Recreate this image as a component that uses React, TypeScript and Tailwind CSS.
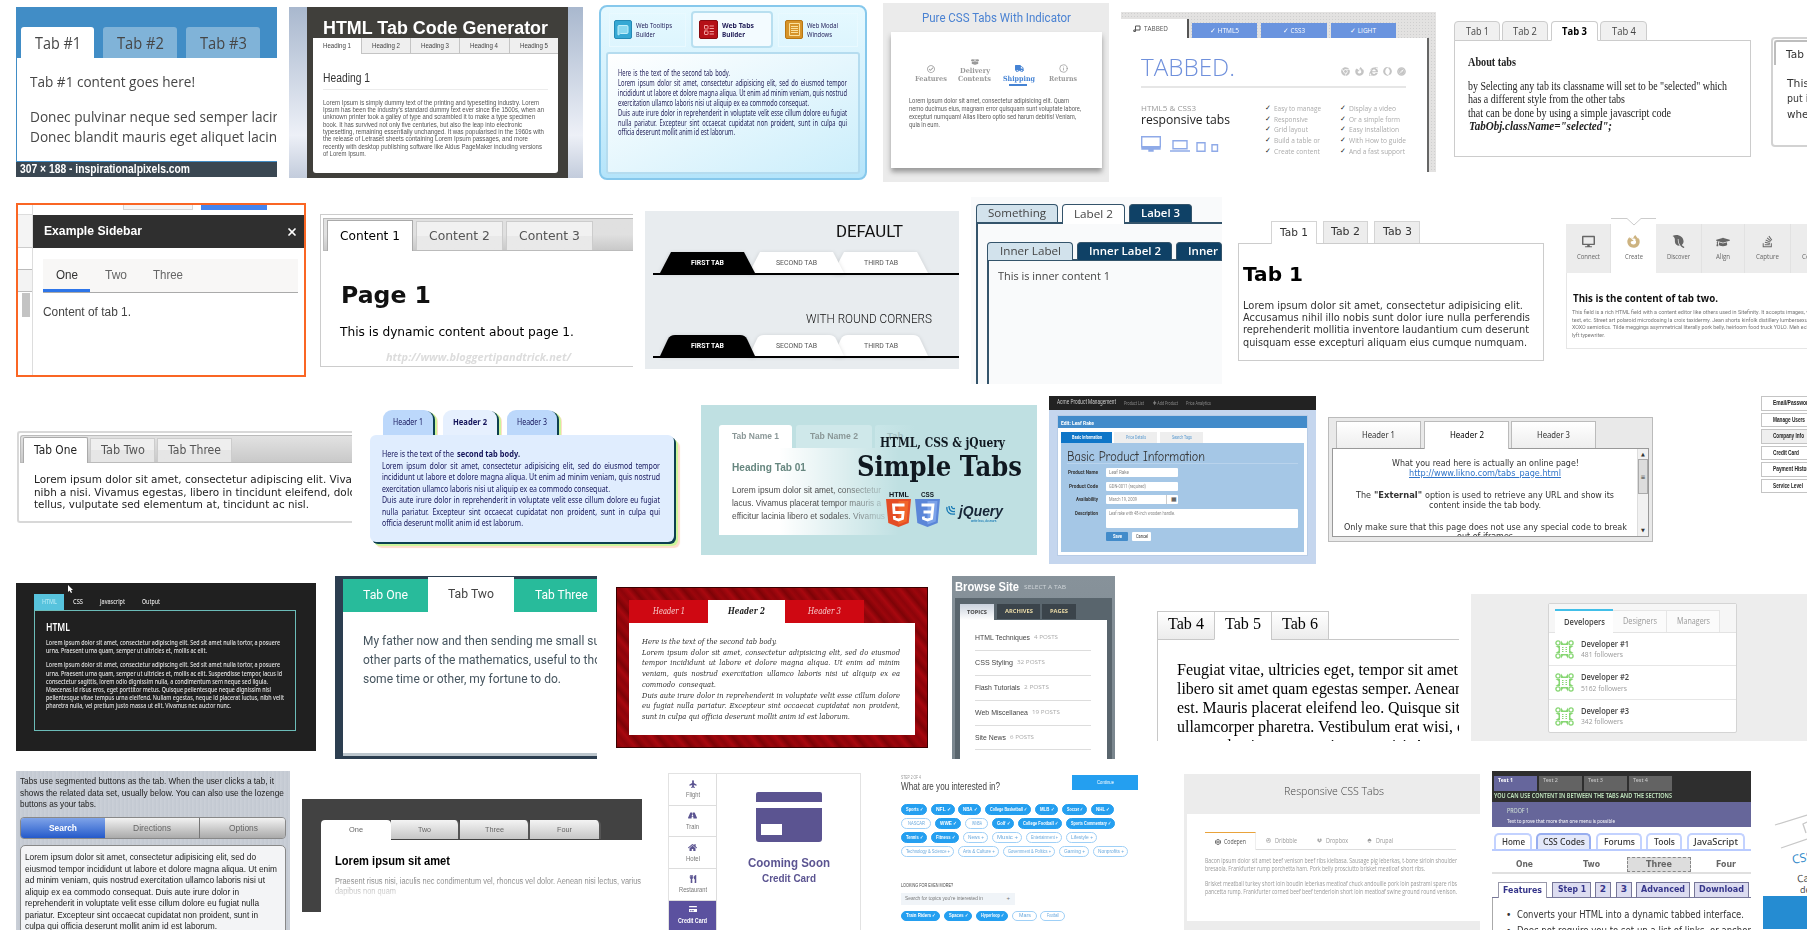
import React, { useLayoutEffect, useRef } from "react";
import { FaFirefoxBrowser, FaLeaf, FaGraduationCap, FaStackOverflow, FaPlane, FaRoad, FaHome, FaUtensils, FaCreditCard, FaDesktop, FaDribbble, FaDropbox, FaDrupal, FaCodepen, FaTruck, FaRegCheckCircle, FaBoxOpen, FaChrome, FaOpera, FaSafari, FaInternetExplorer } from "react-icons/fa";
import { Info, X, MessageSquare, LayoutList } from "lucide-react";

const AR = "[font-family:'Liberation_Sans',sans-serif] ";
const OS = "[font-family:'Open_Sans',sans-serif] ";
const NS = "[font-family:'Noto_Sans',sans-serif] ";
const RO = "[font-family:Roboto,sans-serif] ";
const DV = "[font-family:'DejaVu_Sans',sans-serif] ";
const DC = "[font-family:'DejaVu_Sans_Condensed','DejaVu_Sans',sans-serif] ";
const DS = "[font-family:'DejaVu_Serif',serif] ";
const TM = "[font-family:'Liberation_Serif',serif] ";

/* One unbroken line of copy; `w` condenses or widens it to a fixed measure. */
function L({ c = "", w, children }: { c?: string; w?: number; children: React.ReactNode }) {
  const ref = useRef<HTMLSpanElement>(null);
  useLayoutEffect(() => {
    const el = ref.current;
    if (!el || !w) return;
    el.style.transform = "none";
    el.style.transform = `scaleX(${w / el.getBoundingClientRect().width})`;
  }, [w]);
  return (
    <span className={`block w-max shrink-0 whitespace-nowrap ${c}`} style={w ? { width: w } : undefined}>
      <span ref={ref} className="inline-block origin-left">{children}</span>
    </span>
  );
}

function P({ c = "", lines }: { c?: string; lines: [string, number?][] }) {
  return <div className={`flex flex-col ${c}`}>{lines.map(([t, w], i) => <L key={i} w={w}>{t}</L>)}</div>;
}

/* Justified copy: every line shares one scale and the word gaps take up the rest. */
function J({ c = "", lines }: { c?: string; lines: [string, number][] }) {
  const ref = useRef<HTMLDivElement>(null);
  useLayoutEffect(() => {
    const els = Array.from(ref.current!.querySelectorAll<HTMLSpanElement>("span"));
    els.forEach((e) => { e.style.transform = "none"; e.style.wordSpacing = "0px"; });
    const nat = els.map((e) => e.getBoundingClientRect().width);
    const k = Math.min(...nat.map((n, i) => lines[i][1] / n));
    els.forEach((e, i) => {
      e.style.wordSpacing = `${(lines[i][1] / k - nat[i]) / (lines[i][0].split(" ").length - 1)}px`;
      e.style.transform = `scaleX(${k})`;
    });
  });
  return <div ref={ref} className={`flex flex-col items-start ${c}`}>{lines.map(([t], i) => <span key={i} className="block origin-left whitespace-nowrap">{t}</span>)}</div>;
}

function Box({ c = "", children }: { c?: string; children?: React.ReactNode }) {
  return <div className={`shrink-0 ${c}`}>{children}</div>;
}

function Tab({ c = "", w, children }: { c?: string; w?: number; children?: React.ReactNode }) {
  return <div className={`flex shrink-0 items-center justify-center ${c}`}><L w={w}>{children}</L></div>;
}

function HashTabs() {
  return (
    <Box c={OS + "ml-[16px] mt-[7px] flex h-[170px] w-[261px] flex-col overflow-hidden bg-white text-[#464646]"}>
      <div className="flex h-[51px] shrink-0 items-end bg-[#418dc6] pl-[5px] text-[15.5px] font-medium">
        <Tab c="h-[31px] w-[73px] rounded-t-[3px] bg-white pt-[3px]" w={46}>Tab #1</Tab>
        <Tab c="ml-[9px] h-[31px] w-[74px] rounded-t-[3px] bg-[#80b3d8] pt-[3px]" w={47}>Tab #2</Tab>
        <Tab c="ml-[9px] h-[31px] w-[74px] rounded-t-[3px] bg-[#80b3d8] pt-[3px]" w={47}>Tab #3</Tab>
      </div>
      <div className="h-[104px] shrink-0 border-b border-l border-[#418dc6] pl-[13px] pt-[14px] text-[14.5px] leading-5">
        <L w={165}>Tab #1 content goes here!</L>
        <L c="mt-[15px]" w={248}>Donec pulvinar neque sed semper lacir</L>
        <L w={247}>Donec blandit mauris eget aliquet lacin</L>
      </div>
      <div className={AR + "h-[15px] bg-[#3a4752] pl-[4px] text-[12px] font-bold leading-[15px] text-white"}>
        <L w={170}>307 × 188 - inspirationalpixels.com</L>
      </div>
    </Box>
  );
}

function CodeGenerator() {
  return (
    <Box c={AR + "ml-[12px] mt-[7px] h-[171px] w-[294px] bg-linear-to-b from-[#a9b8ce] via-[#edf0f7] via-75% to-[#c3ccdc] pl-[18px]"}>
      <div className="h-full w-[261px] bg-[#403f3b] pl-[6px] pt-[11px]">
        <L c="ml-[10px] text-[18px] font-bold leading-5 text-white" w={225}>HTML Tab Code Generator</L>
        <div className="h-[135px] w-[245px] rounded-b-[3px] bg-white">
          <div className="flex text-[7.5px] text-[#444]">
            <Tab c="h-[16px] w-[48px]" w={28}>Heading 1</Tab>
            {["Heading 2", "Heading 3", "Heading 4", "Heading 5"].map((t) => (
              <Tab key={t} c="h-[16px] w-[49.2px] border-b border-l border-[#c4c4c4] bg-[#efefef]" w={28}>{t}</Tab>
            ))}
          </div>
          <L c="ml-[10px] mt-[17px] text-[12.5px] leading-[14px] text-[#333]" w={47}>Heading 1</L>
          <div className="ml-[10px] mt-[4px] h-px w-[225px] bg-[#ececec]" />
          <P c="ml-[10px] mt-[8.5px] text-[6.7px] leading-[7.35px] text-[#555]" lines={[
            ["Lorem Ipsum is simply dummy text of the printing and typesetting industry. Lorem", 216],
            ["Ipsum has been the industry's standard dummy text ever since the 1500s, when an", 221],
            ["unknown printer took a galley of type and scrambled it to make a type specimen", 212],
            ["book. It has survived not only five centuries, but also the leap into electronic", 199],
            ["typesetting, remaining essentially unchanged. It was popularised in the 1960s with", 221],
            ["the release of Letraset sheets containing Lorem Ipsum passages, and more", 205],
            ["recently with desktop publishing software like Aldus PageMaker including versions", 219],
            ["of Lorem Ipsum.", 43]]} />
        </div>
      </div>
    </Box>
  );
}

function WebBuilder() {
  const icon = "flex h-[19px] items-center justify-center rounded-[2px] border ";
  return (
    <Box c={NS + "ml-[16px] mt-[5px] h-[175px] w-[268px] rounded-[8px] border-2 border-[#86c8ec] bg-linear-to-b from-[#e6f9ff] via-[#d2f0fc] to-[#b4e4fa] px-[5px] pt-[4px] text-[#26235c]"}>
      <div className="flex items-center text-[7.6px] leading-[8.5px]">
        <div className="ml-[3px] flex h-[34px] w-[77px] items-center border border-[#e9f9ff] pl-[4px]">
          <div className={icon + "w-[18px] border-[#2389b4] bg-[#35a8d4] text-[#c0eefa]"}><MessageSquare size={12} fill="#8ad8ef" /></div>
          <div className="ml-[4px]"><L w={36}>Web Tooltips</L><L w={19}>Builder</L></div>
        </div>
        <div className="ml-[5px] flex h-[37px] w-[82px] items-center rounded-[4px] border-2 border-[#b8dff0] bg-[#f3fbff] pl-[6px] font-bold">
          <div className={icon + "w-[19px] border-[#870a10] bg-[#b51017] text-[#f4a0a0]"}><LayoutList size={12} /></div>
          <div className="ml-[4px]"><L w={32}>Web Tabs</L><L w={23}>Builder</L></div>
        </div>
        <div className="ml-[5px] flex h-[34px] w-[80px] items-center border border-[#e9f9ff] pl-[6px]">
          <div className={icon + "w-[18px] border-[#b97612] bg-[#d6942a] text-[#fbe19d]"}>
            <svg width="11" height="13" viewBox="0 0 11 13" fill="none" stroke="currentColor"><path d="M.5.5h10v12H.5zM2 3.500h7M2 5.500h7M2 7.500h7M2 9.500h7" /></svg>
          </div>
          <div className="ml-[4px]"><L w={31}>Web Modal</L><L w={25}>Windows</L></div>
        </div>
      </div>
      <div className="mt-[4px] h-[122px] w-[254px] rounded-[3px] border-2 border-[#b5dcef] bg-linear-to-br from-white to-[#cbeefb] pl-[10px] pt-[14px]">
        <J c="text-[8.3px] leading-[9.9px]" lines={[
          ["Here is the text of the second tab body.", 112],
          ["Lorem ipsum dolor sit amet, consectetur adipisicing elit, sed do eiusmod tempor", 229],
          ["incididunt ut labore et dolore magna aliqua. Ut enim ad minim veniam, quis nostrud", 229],
          ["exercitation ullamco laboris nisi ut aliquip ex ea commodo consequat.", 191],
          ["Duis aute irure dolor in reprehenderit in voluptate velit esse cillum dolore eu fugiat", 229],
          ["nulla pariatur. Excepteur sint occaecat cupidatat non proident, sunt in culpa qui", 229],
          ["officia deserunt mollit anim id est laborum.", 117]]} />
      </div>
    </Box>
  );
}

function Indicator() {
  const it = "flex flex-col items-center justify-end ";
  return (
    <Box c={RO + "ml-[16px] mt-[3px] h-[179px] w-[226px] bg-[#ebebeb] pl-[8px]"}>
      <L c="ml-[31px] pt-[7px] text-[12.5px] leading-[15px] text-[#4a82d2]" w={149}>Pure CSS Tabs With Indicator</L>
      <div className="mt-[7px] h-[136px] w-[211px] bg-white shadow-[0_4px_5px_#999]">
        <div className={DS + "flex h-[50px] pl-[24px] text-[7px] font-bold leading-[7.5px] text-[#9a9a9a]"}>
          <div className={it + "w-[32px]"}><FaRegCheckCircle size={8} className="mb-[2px]" /><L w={32}>Features</L></div>
          <div className={it + "ml-[11px] w-[33px]"}><FaBoxOpen size={8} className="mb-[1px]" /><L w={30}>Delivery</L><L w={33}>Contents</L></div>
          <div className={it + "ml-[12px] w-[32px] text-[#4583d4]"}><FaTruck size={9} className="mb-[2px]" /><L w={32}>Shipping</L></div>
          <div className={it + "ml-[14px] w-[28px]"}><Info size={9} className="mb-[2px]" /><L w={28}>Returns</L></div>
        </div>
        <div className="ml-[118px] mt-[2px] h-[1.5px] w-[18px] bg-[#4583d4]" />
        <P c="ml-[18px] mt-[11px] text-[6.8px] leading-[8px] text-[#5c5c5c]" lines={[
          ["Lorem ipsum dolor sit amet, consectetur adipisicing elit. Quam", 160],
          ["nemo ducimus eius, magnam error quisquam sunt voluptate labore,", 172],
          ["excepturi numquam! Alias libero optio sed harum debitis! Veniam,", 167],
          ["quia in eum.", 31]]} />
      </div>
    </Box>
  );
}

function Checks({ c, items }: { c: string; items: [string, number][] }) {
  return (
    <div className={c + " leading-[10.7px] text-[#ababab]"}>
      {items.map(([t, w]) => (
        <div key={t} className="flex"><span className="w-[9px] text-[6.5px] text-[#222]">✓</span><L w={w}>{t}</L></div>
      ))}
    </div>
  );
}

function Tabbed() {
  return (
    <Box c={OS + "ml-[12px] mt-[12px] h-[160px] w-[315px] overflow-hidden bg-[#e3e2e1] bg-[radial-gradient(#cfcfcf_35%,transparent_40%)] bg-[size:3px_3px] pt-[7px]"}>
      <div className="flex h-[19px] items-end text-[6.5px] text-white">
        <div className="flex h-[19px] w-[68px] items-center border-r-2 border-[#555] bg-white pl-[12px] text-[#555]">
          <svg width="8" height="8" viewBox="0 0 8 8" fill="none" stroke="currentColor"><path d="M2.500 1h4.500v4H2.500zM2.500 5v1.500H.8V5h1.700" /></svg>
          <L c="ml-[3px]" w={24}>TABBED</L>
        </div>
        <Tab c="ml-[3px] h-[15px] w-[65px] bg-[#6a94df]" w={29}>✓ HTML5</Tab>
        <Tab c="ml-[4px] h-[15px] w-[66px] bg-[#6a94df]" w={22}>✓ CSS3</Tab>
        <Tab c="ml-[3.5px] h-[15px] w-[65px] bg-[#6a94df]" w={26}>✓ LIGHT</Tab>
      </div>
      <div className="h-[134px] w-[308px] border-r-2 border-[#666] bg-white pl-[20px] pt-[16px]">
        <div className="flex w-[265px] items-center justify-between">
          <L c="text-[23px] font-light leading-[26px] text-[#6f90dc]" w={94}>TABBED.</L>
          <div className="mt-[8px] flex gap-[5px] text-[#c4c4c4]"><FaChrome size={9} /><FaFirefoxBrowser size={9} /><FaInternetExplorer size={9} /><FaOpera size={9} /><FaSafari size={9} /></div>
        </div>
        <div className="mt-[6px] h-[2px] w-[265px] bg-[#e6e6e6]" />
        <div className="flex pt-[15px] text-[7.3px]">
          <div className="w-[124px]">
            <L c="leading-[10px] text-[#999]" w={55}>HTML5 &amp; CSS3</L>
            <L c="text-[12.5px] leading-[14px] text-[#222]" w={89}>responsive tabs</L>
            <svg className="mt-[9px] text-[#8faae8]" width="80" height="16" viewBox="0 0 80 16" fill="none" stroke="currentColor" strokeWidth="1.4">
              <path d="M.7.7h18.6v10H.7z" /><path d="M1 11h18v2H1zM8 13h4v2H8z" fill="currentColor" /><path d="M32 4.7h14v8H32zM29 15h20M56 6.7h8v8.6h-8zM71 8.7h5.5v6.6H71z" />
            </svg>
          </div>
          <Checks c="w-[75px]" items={[["Easy to manage", 47], ["Responsive", 34], ["Grid layout", 34], ["Build a table or", 46], ["Create content", 46]]} />
          <Checks c="" items={[["Display a video", 47], ["Or a simple form", 51], ["Easy installation", 50], ["With How to guide", 57], ["And a fast support", 56]]} />
        </div>
      </div>
    </Box>
  );
}

function AboutTabs() {
  const t = "h-[20px] rounded-t-[4px] border border-[#ccc] bg-[#f0f0f0] text-[#444] ";
  return (
    <Box c="ml-[18px] mt-[21px] w-[297px]">
      <div className={OS + "flex text-[10px]"}>
        <Tab c={t + "w-[46px]"} w={23}>Tab 1</Tab>
        <Tab c={t + "ml-[2px] w-[46px]"} w={24}>Tab 2</Tab>
        <Tab c="relative z-10 ml-[3px] h-[20px] w-[47px] rounded-t-[4px] border border-b-white border-[#ccc] bg-white font-bold" w={25}>Tab 3</Tab>
        <Tab c={t + "ml-[2px] w-[47px]"} w={24}>Tab 4</Tab>
      </div>
      <div className={TM + "-mt-px h-[117px] border border-[#ccc] pl-[13px] pt-[15px] text-[12.5px] leading-[13.2px] text-[#222]"}>
        <L c="text-[11.5px] font-bold" w={48}>About tabs</L>
        <P c="mt-[11px]" lines={[["by Selecting any tab its classname will set to be \"selected\" which", 259], ["has a different style from the other tabs", 157], ["that can be done by using a simple javascript code", 203]]} />
        <L c="ml-[1px] font-bold italic" w={143}>TabObj.className="selected";</L>
      </div>
    </Box>
  );
}

function EdgeTab() {
  return (
    <Box c={DV + "ml-[20px] mt-[37px] h-[110px] w-[50px] rounded-[4px] border-2 border-[#d2d2d2] pt-[1px] text-[10.5px] leading-[15.3px] text-[#333]"}>
      <div className="ml-px h-[25px] rounded-tl-[3px] border-l-2 border-t-2 border-[#bdbdbd] pl-[10px] pt-[5px]"><L w={28}>Tab 1</L></div>
      <P c="ml-[14px] mt-[11px]" lines={[["This is", 34], ["put it", 25], ["when", 28]]} />
    </Box>
  );
}

function Sidebar() {
  return (
    <Box c={AR + "ml-[16px] mt-[8px] flex h-[174px] w-[290px] overflow-hidden border-[2.5px] border-[#fa6624] bg-white"}>
      <div className="flex w-[14px] flex-col">
        <div className="h-[10px] border-b border-[#ddd]" />
        <div className="h-[33px] border-b border-[#ccc] bg-[#f4f4f4]" />
        <div className="h-[22px] border-b border-[#bbb]" />
        <div className="h-[22px] border-b border-[#bbb] bg-[#f3f3f3]" />
        <div className="ml-[4px] mt-px h-[24px] w-[8px] bg-[#c3c3c3]" />
      </div>
      <div className="flex-1 border-l border-[#ddd]">
        <div className="flex h-[10px] items-start">
          <div className="ml-[90px] h-[5px] w-[70px] border border-t-0 border-[#d5d5d5] bg-[#f5f5f5]" />
          <div className="ml-[8px] h-[5px] w-[66px] bg-[#4484ee]" />
        </div>
        <div className="flex h-[33px] items-center justify-between bg-[#2f2f2f] pl-[11px] pr-[6px] text-white">
          <L c="text-[12.5px] font-bold" w={98}>Example Sidebar</L><X size={12} strokeWidth={3.5} />
        </div>
        <div className="ml-[10px] mt-[11px] w-[255px] border-b border-[#aaa] bg-[#f8f7f6] text-[12.5px] text-[#666]">
          <div className="flex h-[33px]">
            <Tab c="h-[33px] w-[47px] border-b-[3px] border-[#2d75e9] pt-[3px] text-[#333]" w={22}>One</Tab>
            <Tab c="ml-[14px] h-[33px] w-[23px]" w={22}>Two</Tab>
            <Tab c="ml-[25px] h-[33px] w-[32px]" w={30}>Three</Tab>
          </div>
        </div>
        <L c="ml-[10px] mt-[11px] text-[12.5px] leading-4 text-[#444]" w={88}>Content of tab 1.</L>
      </div>
    </Box>
  );
}

function DynamicContent() {
  const t = "h-[29px] w-[87px] border border-b-0 border-[#ccc] bg-linear-to-b from-[#f1f1f1] from-50% to-[#e9e9e9] to-50% ";
  return (
    <Box c={DV + "ml-[14px] mt-[19px] h-[153px] w-[313px] overflow-hidden border border-r-0 border-[#ccc] pl-[2px] pt-[3px]"}>
      <div className="flex h-[33px] items-end border border-[#bbb] border-r-0 bg-linear-to-b from-[#e0e0e0] from-50% to-[#c9c9c9] pl-[3px] text-[12px] text-[#555]">
        <Tab c="-mb-px h-[31px] w-[86px] border border-b-0 border-[#aaa] bg-white text-black" w={60}>Content 1</Tab>
        <Tab c={t + "ml-[3px]"} w={61}>Content 2</Tab>
        <Tab c={t + "ml-[3px]"} w={61}>Content 3</Tab>
      </div>
      <L c="ml-[18px] mt-[29px] text-[23px] font-bold leading-[30px] text-[#111]" w={90}>Page 1</L>
      <L c="ml-[17px] mt-[14px] text-[12px] leading-4 text-black" w={234}>This is dynamic content about page 1.</L>
      <L c={OS + "ml-[63px] mt-[9px] text-[11px] font-bold italic leading-4 text-[#dcdcdc]"} w={185}>http://www.bloggertipandtrick.net/</L>
    </Box>
  );
}

function Trapezoids({ round }: { round?: boolean }) {
  const shape = round
    ? "M0 21 L8 4 Q10 0 15 0 H80 Q85 0 87 4 L95 21 Z"
    : "M0 21 L11 0 H84 L95 21 Z";
  return (
    <div className={RO + "ml-[8px] border-b-2 border-black"}>
      <div className="flex h-[21px] text-[7.8px] text-[#555]">
        {["FIRST TAB", "SECOND TAB", "THIRD TAB"].map((t, i) => (
          <div key={t} className={["z-30 ml-[7px] font-bold text-white", "z-20 -ml-[6px]", "z-10 -ml-[11px]"][i] + " relative flex h-[21px] w-[95px] items-center justify-center"}>
            <svg className="absolute inset-0 overflow-visible drop-shadow-sm" width="95" height="21" viewBox="0 0 95 21" preserveAspectRatio="none"><path d={shape} fill={i ? "#fff" : "#000"} /></svg>
            <span className="relative"><L w={[33, 41, 34][i]}>{t}</L></span>
          </div>
        ))}
      </div>
    </div>
  );
}

function ShapeTabs() {
  return (
    <Box c={RO + "ml-[12px] mt-[16px] h-[158px] w-[314px] overflow-hidden bg-[#e8ecef] text-[#111]"}>
      <L c="ml-[191px] mt-[11px] text-[16px] leading-5" w={67}>DEFAULT</L>
      <div className="mt-[10px]"><Trapezoids /></div>
      <L c="ml-[161px] mt-[36px] text-[12.5px] font-light leading-4" w={126}>WITH ROUND CORNERS</L>
      <div className="mt-[8px]"><Trapezoids round /></div>
    </Box>
  );
}

function NestedTabs() {
  const t = "rounded-t-[4px] border-[1.5px] border-b-0 border-[#34546b] ";
  return (
    <Box c={OS + "ml-[12px] mt-[2px] h-[187px] w-[251px] overflow-hidden bg-[#f9fafb] pl-[5px] pt-[7px] text-[11px] text-[#444]"}>
      <div className="flex h-[18px]">
        <Tab c={t + "h-[18px] w-[82px] bg-[#d2e2ec]"} w={58}>Something</Tab>
        <Tab c={t + "relative z-10 ml-[4px] h-[20px] w-[63px] bg-white"} w={39}>Label 2</Tab>
        <Tab c={t + "ml-[4px] h-[18px] w-[63px] bg-[#0f4166] font-semibold text-white"} w={39}>Label 3</Tab>
      </div>
      <div className="h-[170px] border-l-2 border-t-2 border-[#34546b] pl-[9px] pt-[18px]">
        <div className="flex h-[17px]">
          <Tab c={t + "h-[18px] w-[86px] bg-[#d2e2ec]"} w={61}>Inner Label</Tab>
          <Tab c={t + "ml-[4px] h-[18px] w-[95px] bg-[#0f4166] font-semibold text-white"} w={72}>Inner Label 2</Tab>
          <div className={t + "ml-[4px] h-[18px] w-[60px] bg-[#0f4166] pl-[11px] font-semibold text-white"}><L w={30}>Inner</L></div>
        </div>
        <div className="h-[140px] border-l-2 border-t-2 border-[#34546b] pl-[9px] pt-[7px]">
          <L c="leading-4" w={112}>This is inner content 1</L>
        </div>
      </div>
    </Box>
  );
}

function PlainTabs() {
  const t = "border border-b-0 border-[#d4d4d4] ";
  return (
    <Box c={DV + "ml-[16px] mt-[26px] w-[306px] text-[#333]"}>
      <div className="flex pl-[33px] text-[11px]">
        <Tab c={t + "relative z-10 h-[23px] w-[46px] bg-white"} w={28}>Tab 1</Tab>
        <Tab c={t + "ml-[6px] h-[22px] w-[45px] bg-[#ededed]"} w={29}>Tab 2</Tab>
        <Tab c={t + "ml-[6px] h-[22px] w-[46px] bg-[#ededed]"} w={29}>Tab 3</Tab>
      </div>
      <div className="-mt-px h-[118px] border border-[#ccc] pl-[4px] pt-[18px]">
        <L c="text-[20px] font-bold leading-6 text-black" w={60}>Tab 1</L>
        <P c="mt-[13px] text-[10.5px] leading-[12.2px]" lines={[
          ["Lorem ipsum dolor sit amet, consectetur adipisicing elit.", 280],
          ["Accusamus nihil illo nobis sunt dolor iure nulla perferendis", 287],
          ["reprehenderit mollitia inventore laudantium cum deserunt", 286],
          ["quisquam esse excepturi aliquam eius cumque numquam.", 284]]} />
      </div>
    </Box>
  );
}

function IconTabs() {
  const t = "flex h-[49px] shrink-0 flex-col items-center border-r border-[#e2e2e2] bg-[#ececec] pt-[11px] ";
  return (
    <Box c={OS + "ml-[22px] mt-[23px] h-[131px] w-[241px] overflow-hidden text-[#666]"}>
      <div className="flex h-[55px] items-end text-[7.3px]">
        <div className={t + "w-[45px]"}><FaDesktop size={13} /><L c="mt-[3px]" w={23}>Connect</L></div>
        <div className="flex h-[55px] w-[45px] shrink-0 flex-col items-center">
          <svg width="45" height="8" viewBox="0 0 45 8" fill="none" stroke="#ccc"><path d="M0 .5H16L23 7 30 .5H45" /></svg>
          <FaFirefoxBrowser size={13} className="mt-[9px] text-[#cdb380]" /><L c="mt-[3px]" w={18}>Create</L>
        </div>
        <div className={t + "w-[46px]"}><FaLeaf size={13} className="-rotate-90" /><L c="mt-[3px]" w={23}>Discover</L></div>
        <div className={t + "w-[43px]"}><FaGraduationCap size={14} /><L c="mt-[2px]" w={14}>Align</L></div>
        <div className={t + "w-[46px]"}><FaStackOverflow size={13} /><L c="mt-[3px]" w={23}>Capture</L></div>
        <div className={t + "w-[46px]"}><span className="h-[13px]" /><L c="mt-[3px]" w={23}>Convert</L></div>
      </div>
      <div className="h-[76px] border-b border-l border-[#e6e6e6] pl-[5px] pt-[17px]">
        <L c="ml-px text-[11px] font-bold leading-4 text-[#111]" w={145}>This is the content of tab two.</L>
        <P c={RO + "mt-[3px] text-[5.5px] leading-[7.5px] text-[#777]"} lines={[
          ["This field is a rich HTML field with a content editor like others used in Sitefinity. It accepts images, videos, tables,", 268],
          ["text, etc. Street art polaroid microdosing la croix taxidermy. Jean shorts kinfolk distillery lumbersexual pinterest", 262],
          ["XOXO semiotics. Tilde meggings asymmetrical literally pork belly, heirloom food truck YOLO. Meh echo park", 252],
          ["lyft typewriter.", 33]]} />
      </div>
    </Box>
  );
}

function GreyTabs() {
  const t = "h-[24px] border border-b-0 border-[#ccc] bg-linear-to-b from-[#efefef] from-50% to-[#e6e6e6] to-50% text-[#555] ";
  return (
    <Box c={DV + "ml-[17px] mt-[41px] h-[92px] w-[335px] overflow-hidden rounded-l-[3px] border-2 border-r-0 border-[#d8d8d8] pl-px pt-[2px] text-[#222]"}>
      <div className="flex h-[28px] items-end rounded-tl-[3px] border border-r-0 border-[#bbb] bg-linear-to-b from-[#e2e2e2] to-[#c9c9c9] pl-[2px] text-[11.5px]">
        <Tab c="-mb-px h-[26px] w-[65px] rounded-t-[2px] border border-b-0 border-[#aaa] bg-white" w={43}>Tab One</Tab>
        <Tab c={t + "ml-[2px] w-[65px]"} w={44}>Tab Two</Tab>
        <Tab c={t + "ml-[2px] w-[75px]"} w={53}>Tab Three</Tab>
      </div>
      <P c="ml-[14px] mt-[11px] text-[11.3px] leading-[12.6px]" lines={[
        ["Lorem ipsum dolor sit amet, consectetur adipiscing elit. Viva", 318],
        ["nibh a nisi. Vivamus egestas, libero in tincidunt eleifend, dolo", 322],
        ["tellus, vulputate sed elementum at, tincidunt ac nisl.", 275]]} />
    </Box>
  );
}

function ShadowTabs() {
  const t = "h-[25px] rounded-t-[9px] shadow-[2px_1px_0_#0d4050,4px_2px_0_#cdf59a,5px_3px_0_#ffdccb] ";
  return (
    <Box c={NS + "ml-[18px] mt-[20px] w-[310px] text-[#14145a]"}>
      <div className="flex pl-[13px] text-[8.5px]">
        <Tab c={t + "w-[50px] bg-[#bcd8fb]"} w={30}>Header 1</Tab>
        <Tab c={t + "ml-[10px] w-[54px] bg-[#e6f0fe] font-bold"} w={34}>Header 2</Tab>
        <Tab c={t + "ml-[10px] w-[50px] bg-[#bcd8fb]"} w={30}>Header 3</Tab>
      </div>
      <div className="relative h-[107px] w-[304px] rounded-[6px] bg-[#e0edfe] pl-[12px] pt-[14px] text-[8.8px] leading-[11.5px] shadow-[2px_2px_0_#0d4050,4px_4px_0_#cdf59a,6px_6px_1px_#ffdccb]">
        <div className="flex gap-[3px]"><L w={72}>Here is the text of the</L><L c="font-bold" w={63}>second tab body.</L></div>
        <J lines={[
          ["Lorem ipsum dolor sit amet, consectetur adipisicing elit, sed do eiusmod tempor", 278],
          ["incididunt ut labore et dolore magna aliqua. Ut enim ad minim veniam, quis nostrud", 278],
          ["exercitation ullamco laboris nisi ut aliquip ex ea commodo consequat.", 228],
          ["Duis aute irure dolor in reprehenderit in voluptate velit esse cillum dolore eu fugiat", 278],
          ["nulla pariatur. Excepteur sint occaecat cupidatat non proident, sunt in culpa qui", 278],
          ["officia deserunt mollit anim id est laborum.", 141]]} />
      </div>
    </Box>
  );
}

function Shield({ n, a, b }: { n: string; a: string; b: string }) {
  return (
    <svg width="25" height="28" viewBox="0 0 25 28">
      <path d="M0 0h25l-2.300 24L12.500 28 2.300 24z" fill={a} /><path d="M12.500 2h10l-1.800 20.500-8.200 3z" fill={b} />
      {n === "5"
        ? <path d="M18.500 6H7.500l.6 7.500h9l-.6 6-4 1.500-4-1.500-.2-2.500" fill="none" stroke="#fff" strokeWidth="2.800" />
        : <path d="M6.500 6h11.500l-.7 7H8.500M17.300 13l-.7 6.500-4.100 1.500-4-1.500-.2-2" fill="none" stroke="#fff" strokeWidth="2.800" />}
    </svg>
  );
}

function SimpleTabs() {
  return (
    <Box c={AR + "relative ml-[21px] mt-[15px] h-[150px] w-[336px] overflow-hidden bg-[#bfe0e2] pl-[18px] pt-[20px]"}>
      <div className="flex text-[9.5px] font-bold text-[#8a9797]">
        <Tab c="h-[23px] w-[73px] rounded-t-[3px] bg-white" w={47}>Tab Name 1</Tab>
        <Tab c="ml-[4px] h-[23px] w-[76px] rounded-t-[3px] bg-[#cfe8ea]" w={48}>Tab Name 2</Tab>
        <div className="ml-[3px] flex h-[23px] w-[40px] items-center rounded-t-[3px] bg-linear-to-r from-[#c9e6e8] to-[#bfe0e2] pl-[12px] text-[#a5c2c4]"><L>Tab</L></div>
      </div>
      <div className="h-[87px] w-[200px] bg-linear-to-r from-white from-30% to-transparent to-90% pl-[13px] pt-[12px]">
        <L c="text-[11px] font-bold leading-[14px] text-[#66867f]" w={74}>Heading Tab 01</L>
        <P c="mt-[9px] text-[9.500px] leading-[13.2px] text-[#4d4d4d] [mask-image:linear-gradient(to_right,black_55%,transparent_88%)]" lines={[
          ["Lorem ipsum dolor sit amet, consectetur", 149], ["lacus. Vivamus placerat tempor mauris a", 149], ["efficitur lacinia libero et sodales. Vivamus", 153]]} />
      </div>
      <div className={DS + "absolute left-[156px] top-[30px] text-[#101820]"}>
        <L c="ml-[23px] text-[13px] font-bold leading-4" w={125}>HTML, CSS &amp; jQuery</L>
        <L c="-mt-px text-[28px] font-bold leading-[34px]" w={165}>Simple Tabs</L>
        <div className={AR + "mt-[7px] flex items-start pl-[29px] font-black"}>
          <div className="flex w-[25px] flex-col items-center text-[6.5px] leading-[8px]"><L w={20}>HTML</L><Shield n="5" a="#e44d26" b="#f16529" /></div>
          <div className="ml-[4px] flex w-[25px] flex-col items-center text-[6.5px] leading-[8px]"><L w={13}>CSS</L><Shield n="3" a="#5b86d8" b="#7ba2e8" /></div>
          <svg className="ml-[6px] mt-[14px]" width="10" height="11" viewBox="0 0 10 11" fill="none" stroke="#1779b5" strokeWidth="1.300"><path d="M1 2c-1 5 3 8 8 7M3 1c0 4 2 6 6 5.500M5.500 1c0 2 1.500 3 3.500 2.500" /></svg>
          <div className="ml-[3px] mt-[12px] italic"><L c="text-[14px] font-bold leading-4 text-[#152536]" w={44}>jQuery</L><L c="ml-[12px] text-[4px] leading-[4px] text-[#1779b5]" w={26}>write less, do more.</L></div>
        </div>
      </div>
    </Box>
  );
}

function Field({ label, w, children }: { label: string; w: number; children: React.ReactNode }) {
  return <div className="mb-[4.5px] flex items-start"><div className="flex w-[37px] justify-end pr-0 font-bold leading-[9px] text-[#333]"><L w={w}>{label}</L></div><div className="ml-[8px]">{children}</div></div>;
}

function ProductForm() {
  const inp = "flex h-[9px] w-[72px] items-center rounded-[1px] bg-white pl-[3px] ";
  return (
    <Box c={RO + "ml-[12px] mt-[6px] h-[168px] w-[267px] bg-[#c5d6ee] text-[5.5px] text-[#888]"}>
      <div className="flex h-[14px] items-center bg-[#222] pl-[8px]">
        <L c="text-[6.5px] text-[#ccc]" w={59}>Acme Product Management</L><L c="ml-[8px]" w={20}>Product List</L><L c="ml-[9px]" w={25}>✚ Add Product</L><L c="ml-[8px]" w={25}>Price Analytics</L>
      </div>
      <div className="ml-[8px] mt-[5px] h-[141px] w-[251px] border border-[#b8cce6] bg-white">
        <div className="flex h-[12px] items-center bg-[#428bca] pl-[3px] text-[6px] font-bold text-white"><L w={33}>Edit: Leaf Rake</L></div>
        <div className="ml-[3px] mt-[4px] flex text-[5px]">
          <Tab c="h-[11px] w-[51px] bg-[#0e76c8] font-bold text-white" w={30}>Basic Information</Tab>
          <Tab c="ml-[2px] h-[11px] w-[43px] bg-[#eee] text-[#5b9bd0]" w={20}>Price Details</Tab>
          <Tab c="ml-[3px] h-[11px] w-[43px] bg-[#eee] text-[#5b9bd0]" w={20}>Search Tags</Tab>
        </div>
        <div className="ml-[3px] h-[109px] w-[243px] bg-[#a5c7e6] pt-[6px]">
          <L c="ml-[6px] text-[14.500px] leading-[16px] text-[#333] [font-family:'Comic_Neue','Lato',sans-serif]" w={138}>Basic Product Information</L>
          <div className="-mt-[2px] mb-[4px] ml-[6px] h-px w-[231px] bg-[#b9d3ec]" />
          <Field label="Product Name" w={30}><div className={inp}><L w={20}>Leaf Rake</L></div></Field>
          <Field label="Product Code" w={29}><div className={inp}><L w={37}>GDN-0011 (required)</L></div></Field>
          <Field label="Availability" w={22}><div className={inp}><L w={28}>March 19, 2009</L><span className="ml-[29px] flex h-full items-center border-l border-[#ccc] pl-[4px] text-[#333]">▦</span></div></Field>
          <Field label="Description" w={23}><div className="h-[19px] w-[192px] rounded-[1px] bg-white pl-[3px] leading-[9px]"><L w={66}>Leaf rake with 48-inch wooden handle.</L></div></Field>
          <div className="ml-[45px] flex"><Tab c="h-[9px] w-[22px] rounded-[1px] bg-[#428bca] font-bold text-white" w={9}>Save</Tab><Tab c="ml-[4px] h-[9px] w-[19px] rounded-[1px] bg-white text-[#333]" w={12}>Cancel</Tab></div>
        </div>
      </div>
    </Box>
  );
}

function ExternalTabs() {
  const t = "w-[85px] border border-b-0 border-[#bbb] ";
  return (
    <Box c={DV + "ml-[12px] mt-[27px] h-[125px] w-[325px] border border-[#bbb] bg-[#e9e9e9] pl-[3px] pt-[3px] text-[#333]"}>
      <div className={NS + "flex h-[27px] pl-[4px] text-[8.5px]"}>
        <Tab c={t + "h-[27px] bg-linear-to-b from-white to-[#eee]"} w={33}>Header 1</Tab>
        <Tab c={t + "relative z-10 ml-[3px] h-[28px] bg-white text-black"} w={34}>Header 2</Tab>
        <Tab c={t + "ml-[2px] h-[27px] bg-linear-to-b from-white to-[#eee]"} w={33}>Header 3</Tab>
      </div>
      <div className="flex h-[89px] w-[317px] overflow-hidden border border-[#999] bg-white text-[8.8px]">
        <div className="flex flex-1 flex-col items-center pt-[10px] leading-[9.5px]">
          <L w={187}>What you read here is actually an online page!</L>
          <L c="text-[#2f74c8]" w={152}><span className="underline">http://www.likno.com/tabs_page.html</span></L>
          <div className="mt-[13px] flex gap-[3px]"><L w={15}>The</L><L c="font-bold" w={48}>"External"</L><L w={189}>option is used to retrieve any URL and show its</L></div>
          <L w={112}>content inside the tab body.</L>
          <L c="mt-[12.500px]" w={283}>Only make sure that this page does not use any special code to break</L>
          <L w={56}>out of iframes</L>
        </div>
        <div className="flex w-[11px] flex-col items-center justify-between border-l border-[#ddd] bg-[#f1f1f1] py-px text-[5px]">
          <span className="leading-[9px]">▲</span>
          <div className="-mt-[33px] flex h-[35px] w-[10px] items-center justify-center border border-[#aaa] bg-[#dcdcdc] text-[6px]">≡</div>
          <span className="leading-[9px]">▼</span>
        </div>
      </div>
    </Box>
  );
}

function SideButtons() {
  const items: [string, number][] = [["Email/Password", 38], ["Manage Users", 32], ["Company Info", 31], ["Credit Card", 26], ["Payment History", 38], ["Service Level", 30]];
  return (
    <Box c={AR + "ml-[108px] mt-[6px] flex w-[60px] flex-col gap-[2px] text-[7px] font-bold text-[#222]"}>
      {items.map(([t, w], i) => (
        <div key={t} className={(i === 2 ? "bg-[#efefef]" : "bg-white") + " flex h-[14.500px] items-center border border-[#c4c4c4] pl-[11px]"}><L w={w}>{t}</L></div>
      ))}
    </Box>
  );
}

function DarkTabs() {
  return (
    <Box c={NS + "ml-[16px] mt-[13px] h-[168px] w-[300px] bg-[#202020] pl-[18px] text-[7.500px] font-medium text-[#e4e4e4]"}>
      <div className="flex h-[11px] pl-[34px] pt-[2px]"><svg width="6" height="8" viewBox="0 0 6 8"><path d="M0 0v7l1.500-1.500L3 8l1-.5L3 5h2z" fill="#fff" /></svg></div>
      <div className="flex h-[16px] items-center">
        <Tab c="h-[16px] w-[30px] bg-[#57c3dd] text-[#b3e9f5]" w={15}>HTML</Tab>
        <L c="ml-[9px]" w={10}>CSS</L><L c="ml-[17px]" w={25}>Javascript</L><L c="ml-[17px]" w={18}>Output</L>
      </div>
      <div className="h-[121px] w-[262px] border border-[#6bbcb8] pl-[11px] pt-[10px] leading-[8.2px]">
        <L c="text-[10.5px] font-semibold leading-3 text-white" w={24}>HTML</L>
        <P c="mt-[5px]" lines={[["Lorem ipsum dolor sit amet, consectetur adipiscing elit. Sed sit amet nulla tortor, a posuere", 234], ["urna. Praesent urna quam, semper ut ultricies et, mollis ac elit.", 161]]} />
        <P c="mt-[6px]" lines={[
          ["Lorem ipsum dolor sit amet, consectetur adipiscing elit. Sed sit amet nulla tortor, a posuere", 234],
          ["urna. Praesent urna quam, semper ut ultricies et, mollis ac elit. Suspendisse tempor, lacus id", 236],
          ["consectetur sagittis, lorem odio dignissim nulla, a condimentum sem neque sed ligula.", 222],
          ["Maecenas id risus eros, eget porttitor metus. Quisque pellentesque neque dignissim nisl", 225],
          ["pellentesque vitae tempus urna eleifend. Nullam egestas, neque id placerat luctus, nibh velit", 238],
          ["pharetra nulla, vel pretium justo massa ut elit. Vivamus nec auctor nunc.", 185]]} />
      </div>
    </Box>
  );
}

function GreenTabs() {
  return (
    <Box c={RO + "ml-[19px] mt-[6px] h-[183px] w-[262px] overflow-hidden bg-[#2c3e50] pl-[8px] pt-px text-[12.5px]"}>
      <div className="flex h-[35px] items-end text-white">
        <Tab c="h-[33px] w-[85px] bg-[#28bb9b]" w={45}>Tab One</Tab>
        <Tab c="h-[35px] w-[86px] bg-white text-[#444]" w={46}>Tab Two</Tab>
        <div className="flex h-[33px] w-[90px] items-center bg-[#28bb9b] pl-[21px]"><L w={53}>Tab Three</L></div>
      </div>
      <div className="h-[144px] w-[260px] border-b-[3px] border-[#bcc6cd] bg-white pl-[20px] pt-[19px] leading-[19.2px] text-[#46555f]">
        <L w={237}>My father now and then sending me small su</L>
        <L w={238}>other parts of the mathematics, useful to tho</L>
        <L w={198}>some time or other, my fortune to do.</L>
      </div>
    </Box>
  );
}

function RedTabs() {
  return (
    <Box c={DS + "ml-[19px] mt-[17px] h-[161px] w-[312px] border border-[#3a0000] bg-[#8e040a] bg-[repeating-linear-gradient(50deg,#7d0307_0px,#9c060c_5px,#8c040a_9px,#a8080f_14px,#7d0307_19px)] pl-[12px] pt-[12px] italic"}>
      <div className="flex text-[8.500px] text-[#f6d0d0]">
        <Tab c="h-[23px] w-[79px] bg-[#cf0812]" w={32}>Header 1</Tab>
        <Tab c="h-[23px] w-[77px] bg-white font-bold text-[#222]" w={37}>Header 2</Tab>
        <Tab c="h-[23px] w-[79px] bg-[#cf0812]" w={33}>Header 3</Tab>
      </div>
      <div className="h-[112px] w-[286px] bg-white pl-[13px] pt-[14px]">
        <J c="text-[8px] leading-[10.7px] text-[#333]" lines={[
          ["Here is the text of the second tab body.", 135],
          ["Lorem ipsum dolor sit amet, consectetur adipisicing elit, sed do eiusmod", 258],
          ["tempor incididunt ut labore et dolore magna aliqua. Ut enim ad minim", 258],
          ["veniam, quis nostrud exercitation ullamco laboris nisi ut aliquip ex ea", 258],
          ["commodo consequat.", 74],
          ["Duis aute irure dolor in reprehenderit in voluptate velit esse cillum dolore", 258],
          ["eu fugiat nulla pariatur. Excepteur sint occaecat cupidatat non proident,", 258],
          ["sunt in culpa qui officia deserunt mollit anim id est laborum.", 208]]} />
      </div>
    </Box>
  );
}

function BrowseSite() {
  const rows: [string, number, string, number][] = [["HTML Techniques", 55, "4 POSTS", 24], ["CSS Styling", 38, "32 POSTS", 28], ["Flash Tutorials", 45, "2 POSTS", 25], ["Web Miscellanea", 53, "19 POSTS", 28], ["Site News", 31, "6 POSTS", 24], ["Web Development", 58, "8 POSTS", 24]];
  return (
    <Box c={AR + "ml-[24px] mt-[6px] h-[183px] w-[163px] overflow-hidden bg-linear-to-b from-[#87929a] to-[#7a868e] px-[3px]"}>
      <div className="flex h-[22px] items-center gap-[5px] text-white"><L c="text-[12.5px] font-bold" w={64}>Browse Site</L><L c={OS + "text-[6px] text-[#cfd5d9]"} w={42}>SELECT A TAB</L></div>
      <div className="h-[170px] bg-[#59656d] px-[5px] pt-[6px]">
        <div className={OS + "flex text-[6px] font-bold text-[#ecdca8]"}>
          <Tab c="h-[16px] w-[34px] bg-linear-to-b from-[#c9d1dc] to-white text-[#444]" w={20}>TOPICS</Tab>
          <Tab c="ml-[3px] h-[15px] w-[43px] bg-[#3b444b]" w={28}>ARCHIVES</Tab>
          <Tab c="ml-[2px] h-[15px] w-[34px] bg-[#3b444b]" w={18}>PAGES</Tab>
        </div>
        <div className="h-[150px] bg-white px-[15px] pt-[6px]">
          {rows.map(([a, aw, b, bw]) => (
            <div key={a} className="flex h-[24.900px] w-[116px] items-center border-b border-[#ddd]"><L c="text-[7.8px] text-[#444]" w={aw}>{a}</L><L c={OS + "ml-[4px] text-[6px] text-[#aaa]"} w={bw}>{b}</L></div>
          ))}
        </div>
      </div>
    </Box>
  );
}

function SerifTabs() {
  const t = "w-[57px] border border-r-0 border-[#c8c8c8] pb-[3px] ";
  return (
    <Box c={TM + "ml-[42px] mt-[41px] h-[130px] w-[302px] overflow-hidden text-black"}>
      <div className="flex h-[28px] text-[17px]">
        <Tab c={t + "h-[29px] bg-linear-to-b from-white to-[#ececec]"} w={36}>Tab 4</Tab>
        <Tab c={t + "relative z-10 h-[29px] border-b-white bg-white"} w={36}>Tab 5</Tab>
        <Tab c="h-[29px] w-[58px] border border-[#c8c8c8] bg-linear-to-b from-white to-[#ececec] pb-[3px]" w={36}>Tab 6</Tab>
      </div>
      <div className="border-l border-t border-[#c8c8c8] pl-[19px] pt-[20px]">
        <P c="text-[17px] leading-[19px]" lines={[
          ["Feugiat vitae, ultricies eget, tempor sit amet", 281],
          ["libero sit amet quam egestas semper. Aenean", 286],
          ["est. Mauris placerat eleifend leo. Quisque sit", 283],
          ["ullamcorper pharetra. Vestibulum erat wisi, c", 287],
          ["commodo vitae, ornare sit amet, wisi. Aenean", 284]]} />
      </div>
    </Box>
  );
}

function Identicon() {
  return (
    <svg width="19" height="19" viewBox="0 0 19 19" fill="none" stroke="#86d672" strokeWidth="1.300">
      {[3, 16].map((x) => [3, 16].map((y) => <circle key={`${x}-${y}`} cx={x} cy={y} r="2.100" />))}
      <path d="M6 .5l2 3h3l2-3v4.500H6zM6 18.500l2-3h3l2 3V14H6zM.5 6l3 2v3l-3 2H5V6zM18.500 6l-3 2v3l3 2H14V6z" fill="#86d672" stroke="none" />
      <path d="M7 7.500h1.500M10.500 7.500H12M7 9.500h1.500M10.500 9.500H12M7 11.500h1.500M10.500 11.500H12" strokeWidth="1.200" />
    </svg>
  );
}

function Developers() {
  return (
    <Box c={OS + "ml-[12px] mt-[24px] h-[147px] w-[336px] bg-[#ededed] pl-[77px] pt-[9px]"}>
      <div className="h-[130px] w-[189px] rounded-[2px] border border-[#d4d4d4] bg-white">
        <div className="flex h-[29px] items-end border-b border-[#e3e3e3] bg-[#f6f6f6] pl-[6px] text-[8.3px] text-[#999]">
          <Tab c="-mb-px h-[24px] w-[58px] border-t-2 border-[#42bfe8] bg-white font-semibold text-[#444]" w={41}>Developers</Tab>
          <Tab c="h-[22px] w-[54px] border-r border-t border-[#e6e6e6] bg-[#fbfbfb]" w={34}>Designers</Tab>
          <Tab c="h-[22px] w-[53px] border-r border-t border-[#e6e6e6] bg-[#fbfbfb]" w={33}>Managers</Tab>
        </div>
        {[["Developer #1", "481 followers", 42], ["Developer #2", "5162 followers", 46], ["Developer #3", "342 followers", 42]].map(([a, b, w], i) => (
          <div key={a} className={(i < 2 ? "border-b " : "") + "flex h-[33.400px] items-center border-[#e6e6e6] pl-[6px]"}>
            <Identicon />
            <div className="ml-[7px] leading-[10.500px]"><L c="text-[8.3px] font-semibold text-[#444]" w={48}>{a}</L><L c="text-[7.300px] text-[#999]" w={w as number}>{b}</L></div>
          </div>
        ))}
      </div>
    </Box>
  );
}

function Segmented() {
  const s = "h-[20px] border-r border-[#777] bg-linear-to-b from-[#f3f3f3] to-[#aaa] text-[#666] ";
  return (
    <Box c={AR + "ml-[16px] mt-[6px] h-[159px] w-[274px] overflow-hidden bg-[#c5cbd4] bg-[repeating-linear-gradient(90deg,#cbd0d8_0px,#c2c8d1_4px)] pl-[4px] pt-[4px] text-[9.800px] text-[#222]"}>
      <P c="leading-[11.500px]" lines={[["Tabs use segmented buttons as the tab. When the user clicks a tab, it", 254], ["shows the related data set, usually below. You can also use the lozenge", 264], ["buttons as your tabs.", 76]]} />
      <div className="mt-[7.500px] flex w-[266px] overflow-hidden rounded-[4px] border border-[#888]">
        <Tab c="h-[20px] w-[84px] bg-linear-to-b from-[#7fa3e8] to-[#2459ca] font-bold text-white" w={28}>Search</Tab>
        <Tab c={s + "w-[95px]"} w={38}>Directions</Tab>
        <Tab c={s + "w-[87px]"} w={29}>Options</Tab>
      </div>
      <div className="mt-[6px] h-[95px] w-[266px] rounded-t-[5px] border border-[#888] bg-[#f3f4f6] pl-[4px] pt-[5px]">
        <P c="leading-[11.500px]" lines={[
          ["Lorem ipsum dolor sit amet, consectetur adipisicing elit, sed do", 231],
          ["eiusmod tempor incididunt ut labore et dolore magna aliqua. Ut enim", 252],
          ["ad minim veniam, quis nostrud exercitation ullamco laboris nisi ut", 240],
          ["aliquip ex ea commodo consequat. Duis aute irure dolor in", 214],
          ["reprehenderit in voluptate velit esse cillum dolore eu fugiat nulla", 234],
          ["pariatur. Excepteur sint occaecat cupidatat non proident, sunt in", 233],
          ["culpa qui officia deserunt mollit anim id est laborum.", 192]]} />
      </div>
    </Box>
  );
}

function FolderTabs() {
  const t = "h-[19px] rounded-tr-[5px] border-r-2 border-[#555] bg-linear-to-b from-[#f4f4f4] to-[#c6c6c6] ";
  return (
    <Box c={AR + "ml-[12px] mt-[34px] h-[113px] w-[340px] overflow-hidden bg-[#424242] pl-[19px] pt-[21px] text-[8px] text-[#666]"}>
      <div className="flex">
        <Tab c="h-[20px] w-[70px] rounded-t-[4px] bg-white" w={14}>One</Tab>
        <Tab c={t + "w-[69px]"} w={13}>Two</Tab><Tab c={t + "w-[70px]"} w={19}>Three</Tab><Tab c={t + "w-[71px]"} w={15}>Four</Tab>
      </div>
      <div className="h-[73px] bg-white pl-[14px] pt-[13px]">
        <L c="text-[12px] font-bold leading-4 text-black" w={115}>Lorem ipsum sit amet</L>
        <P c="mt-[8px] text-[8.500px] leading-[9.500px] text-[#777] [mask-image:linear-gradient(black,rgba(0,0,0,0.2))]" lines={[["Praesent risus nisi, iaculis nec condimentum vel, rhoncus vel dolor. Aenean nisi lectus, varius", 306], ["dapibus non quam", 61]]} />
      </div>
    </Box>
  );
}

function TravelTabs() {
  const t = "flex h-[31.700px] flex-col items-center justify-center gap-[3px] border-b border-[#ddd] leading-[8px] ";
  return (
    <Box c={AR + "ml-[26px] mt-[8px] flex h-[157px] w-[193px] border-x border-t border-[#e2e2e2] text-[#5b5491]"}>
      <div className="w-[48px] border-r border-[#ddd] text-[7px]">
        <div className={t}><FaPlane size={8} className="-rotate-90" /><L c="text-[#777]" w={14}>Flight</L></div>
        <div className={t}><FaRoad size={9} /><L c="text-[#777]" w={13}>Train</L></div>
        <div className={t}><FaHome size={9} /><L c="text-[#777]" w={14}>Hotel</L></div>
        <div className={t}><FaUtensils size={8} /><L c="text-[#777]" w={28}>Restaurant</L></div>
        <div className="flex h-[30px] flex-col items-center justify-center gap-[3px] bg-[#5b519f] font-bold text-white"><FaCreditCard size={8} /><L w={29}>Credit Card</L></div>
      </div>
      <div className="flex flex-1 flex-col items-center pt-[18px]">
        <svg width="66" height="50" viewBox="0 0 66 50" fill="#5b5491"><path d="M2 0h62q2 0 2 2v8H0V2q0-2 2-2zM0 16h66v31q0 3-3 3H3q-3 0-3-3z" /><path d="M5 32h21v11H5z" fill="#fff" /></svg>
        <L c="mt-[13px] text-[13px] font-bold leading-4" w={82}>Cooming Soon</L>
        <L c="text-[10.500px] font-bold leading-[15px]" w={54}>Credit Card</L>
      </div>
    </Box>
  );
}

/* [label, left gap, width, filled] */
type PillT = [string, number, number, boolean];
const pillRows: PillT[][] = [
  [["Sports ✓", 0, 26, true], ["NFL ✓", 4, 24, true], ["NBA ✓", 3, 23, true], ["College Basketball ✓", 4, 46, true], ["MLB ✓", 4, 23, true], ["Soccer ✓", 4, 25, true], ["NHL ✓", 4, 23, true]],
  [["NASCAR", 0, 30, false], ["WWE ✓", 4, 26, true], ["WNBA", 4, 23, false], ["Golf ✓", 4, 22, true], ["College Football ✓", 4, 44, true], ["Sports Commentary ✓", 4, 49, true]],
  [["Tennis ✓", 0, 26, true], ["Fitness ✓", 4, 28, true], ["News +", 4, 25, false], ["Music +", 4, 30, false], ["Entertainment +", 4, 36, false], ["Lifestyle +", 4, 31, false]],
  [["Technology & Science +", 0, 53, false], ["Arts & Culture +", 4, 41, false], ["Government & Politics +", 4, 52, false], ["Gaming +", 4, 30, false], ["Nonprofits +", 4, 35, false]],
];

function Pills({ row }: { row: PillT[] }) {
  return (
    <div className="flex text-[5px]">
      {row.map(([t, g, w, on]) => (
        <div key={t} style={{ marginLeft: g, width: w }} className={(on ? "border-[#249ff0] bg-[#249ff0] font-bold text-white" : "border-[#9fd0f7] text-[#6aa9dd]") + " flex h-[10.500px] items-center justify-center rounded-full border"}>
          <L w={t.includes(" ") ? w - 9 : w - 13}>{t}</L>
        </div>
      ))}
    </div>
  );
}

function Interests() {
  return (
    <Box c={AR + "ml-[40px] mt-[9px] h-[156px] w-[240px] text-[#444]"}>
      <div className="flex justify-between">
        <div><L c="text-[4.500px] leading-[7px] text-[#999]" w={20}>STEP 2 OF 4</L><L c="text-[10px] leading-[12px]" w={99}>What are you interested in?</L></div>
        <Tab c="mr-[3px] mt-px h-[15px] w-[66px] bg-[#249ff0] text-[5px] text-white" w={17}>Continue</Tab>
      </div>
      <div className="mt-[11px] flex flex-col gap-[3.500px]">{pillRows.map((r, i) => <Pills key={i} row={r} />)}</div>
      <L c="mt-[24px] text-[5.500px] leading-[8px]" w={52}>LOOKING FOR EVEN MORE?</L>
      <div className="mb-[6px] mt-[4px] flex h-[12px] w-[114px] items-center justify-between bg-[#f0f4f8] pl-[4px] pr-[5px] text-[6px] text-[#777]"><L w={78}>Search for topics you're interested in</L><span>+</span></div>
      <Pills row={[["Train Riders ✓", 0, 39, true], ["Spaces ✓", 4, 28, true], ["Hyperloop ✓", 4, 32, true], ["Mars", 4, 25, false], ["Football", 3, 25, false]]} />
    </Box>
  );
}

function ResponsiveTabs() {
  return (
    <Box c={OS + "ml-[43px] mt-[9px] h-[156px] w-[296px] overflow-hidden bg-[#ececec] pl-[3px] text-[6.200px] text-[#999]"}>
      <L c="ml-[97px] mt-[9px] text-[11.500px] font-light leading-4 text-[#444]" w={100}>Responsive CSS Tabs</L>
      <div className="mt-[15px] h-[107px] bg-white pl-[18px] pt-[18px]">
        <div className="flex w-[255px] items-center">
          <div className="flex h-[18px] w-[51px] items-center border-r border-t border-[#eee] border-t-[#e9a33b] pl-[10px] text-[#555]"><FaCodepen size={6} /><L c="ml-[3px]" w={22}>Codepen</L></div>
          <div className="flex h-[18px] w-[200px] items-center border-b border-[#ddd] pl-[10px]">
            <FaDribbble size={5} /><L c="ml-[4px]" w={22}>Dribbble</L><FaDropbox size={5} className="ml-[20px]" /><L c="ml-[4px]" w={22}>Dropbox</L><FaDrupal size={5} className="ml-[19px]" /><L c="ml-[4px]" w={17}>Drupal</L>
          </div>
        </div>
        <P c="mt-[7px] leading-[8px]" lines={[["Bacon ipsum dolor sit amet beef venison beef ribs kielbasa. Sausage pig leberkas, t-bone sirloin shoulder", 252], ["bresaola. Frankfurter rump porchetta ham. Pork belly prosciutto brisket meatloaf short ribs.", 220]]} />
        <P c="mt-[7px] leading-[8px]" lines={[["Brisket meatball turkey short loin boudin leberkas meatloaf chuck andouille pork loin pastrami spare ribs", 252], ["pancetta rump. Frankfurter corned beef beef tenderloin short loin meatloaf swine ground round venison.", 252]]} />
      </div>
    </Box>
  );
}

function TabStack() {
  const b = "h-[16px] rounded-t-[5px] border-2 border-b-0 ";
  const w = b + "border-[#c3d2ff] bg-white ";
  const s = "h-[15px] border border-b-0 border-[#777799] bg-[#dcdcf0] ";
  return (
    <Box c={NS + "ml-[12px] mt-[6px] h-[159px] w-[259px] overflow-hidden text-[#333]"}>
      <div className="h-[31px] bg-[#2e2e2e] pl-[2px] pt-[5px] text-[5px] text-[#ccc]">
        <div className="flex gap-[2px] leading-[9px]">
          {["Test 1", "Test 2", "Test 3", "Test 4"].map((t, i) => <div key={t} className={(i ? "bg-[#636363]" : "bg-[#66669c] font-bold text-white") + " h-[14.500px] w-[43px] pl-[4px]"}><L w={15}>{t}</L></div>)}
        </div>
        <L c="text-[6.500px] font-semibold leading-[9px] text-[#c2e6c0]" w={178}>YOU CAN USE CONTENT IN BETWEEN THE TABS AND THE SECTIONS</L>
      </div>
      <div className="h-[25px] bg-[#66669a] pl-[15px] pt-[4px] text-[#d4e6d8]"><L c="text-[6.500px] leading-[9px]" w={22}>PROOF 1</L><L c="mt-[3px] text-[5px] leading-[7px] text-white" w={108}>Text to prove that more than one menu is possible</L></div>
      <div className="mt-[6px] flex border-b-2 border-[#b9cbff] pl-[2px] text-[9.500px] font-medium">
        <Tab c={w + "w-[38px]"} w={23}>Home</Tab><Tab c={b + "ml-[4px] w-[55px] border-[#98aef0] bg-[#e4e9fa]"} w={42}>CSS Codes</Tab><Tab c={w + "ml-[5px] w-[46px]"} w={31}>Forums</Tab><Tab c={w + "ml-[4px] w-[36px]"} w={21}>Tools</Tab><Tab c={w + "ml-[5px] w-[58px]"} w={44}>JavaScript</Tab>
      </div>
      <div className={DV + "mt-[6px] flex h-[17px] items-center border-b-2 border-[#e0e0e0] pl-[24px] text-[8.500px] font-bold text-[#666]"}>
        <L w={17}>One</L><L c="ml-[50px]" w={17}>Two</L><Tab c="ml-[27px] h-[15px] w-[64px] border border-dashed border-[#888] bg-[#ddd]" w={26}>Three</Tab><L c="ml-[25px]" w={20}>Four</L>
      </div>
      <div className={DV + "mt-[8px] flex items-end border-b border-[#777799] pl-[6px] text-[9px] font-bold text-[#35358a]"}>
        <Tab c="-mb-px h-[16px] w-[49px] border border-b-0 border-[#99a] bg-white" w={39}>Features</Tab>
        <Tab c={s + "ml-[5px] w-[39px]"} w={28}>Step 1</Tab><Tab c={s + "ml-[4px] w-[16px]"}>2</Tab><Tab c={s + "ml-[5px] w-[16px]"}>3</Tab><Tab c={s + "ml-[4px] w-[54px]"} w={44}>Advanced</Tab><Tab c={s + "ml-[4px] w-[55px]"} w={45}>Download</Tab>
      </div>
      <div className={DC + "border-l border-[#aaa] pl-[13px] pt-[9px] text-[10px] leading-[15.500px]"}>
        <div className="flex"><span className="w-[11px]">•</span><L w={227}>Converts your HTML into a dynamic tabbed interface.</L></div>
        <div className="flex"><span className="w-[11px]">•</span><L w={234}>Does not require you to set up a list of links, or anchor</L></div>
      </div>
    </Box>
  );
}

function EdgeRibbon() {
  return (
    <Box c={OS + "ml-[12px] mt-[48px] w-[44px] overflow-hidden text-[#444]"}>
      <svg width="44" height="36" viewBox="0 0 44 36" fill="none" stroke="#c8c8c8" strokeWidth="1.300"><path d="M12 12L44 2M18 35L44 26M44 9l-4 2 3 9" /></svg>
      <L c="ml-[29px] mt-[2px] -rotate-12 text-[12px] leading-[14px] text-[#2a86c8]">CSS</L>
      <L c="ml-[34px] mt-[7px] -rotate-6 text-[10px] leading-[12px]">Ca</L>
      <L c="ml-[37px] text-[9px] leading-[12px]">de</L>
      <div className="h-[33px] bg-[#258cd2]" />
    </Box>
  );
}

export default function App() {
  return (
    <main className="flex h-[930px] w-[1807px] flex-col overflow-hidden bg-white">
      <section className="flex h-[195px] shrink-0 items-start overflow-hidden"><HashTabs /><CodeGenerator /><WebBuilder /><Indicator /><Tabbed /><AboutTabs /><EdgeTab /></section>
      <section className="flex h-[195px] shrink-0 items-start overflow-hidden"><Sidebar /><DynamicContent /><ShapeTabs /><NestedTabs /><PlainTabs /><IconTabs /></section>
      <section className="flex h-[180px] shrink-0 items-start overflow-hidden"><GreyTabs /><ShadowTabs /><SimpleTabs /><ProductForm /><ExternalTabs /><SideButtons /></section>
      <section className="flex h-[195px] shrink-0 items-start overflow-hidden"><DarkTabs /><GreenTabs /><RedTabs /><BrowseSite /><SerifTabs /><Developers /></section>
      <section className="flex h-[165px] shrink-0 items-start overflow-hidden"><Segmented /><FolderTabs /><TravelTabs /><Interests /><ResponsiveTabs /><TabStack /><EdgeRibbon /></section>
    </main>
  );
}
